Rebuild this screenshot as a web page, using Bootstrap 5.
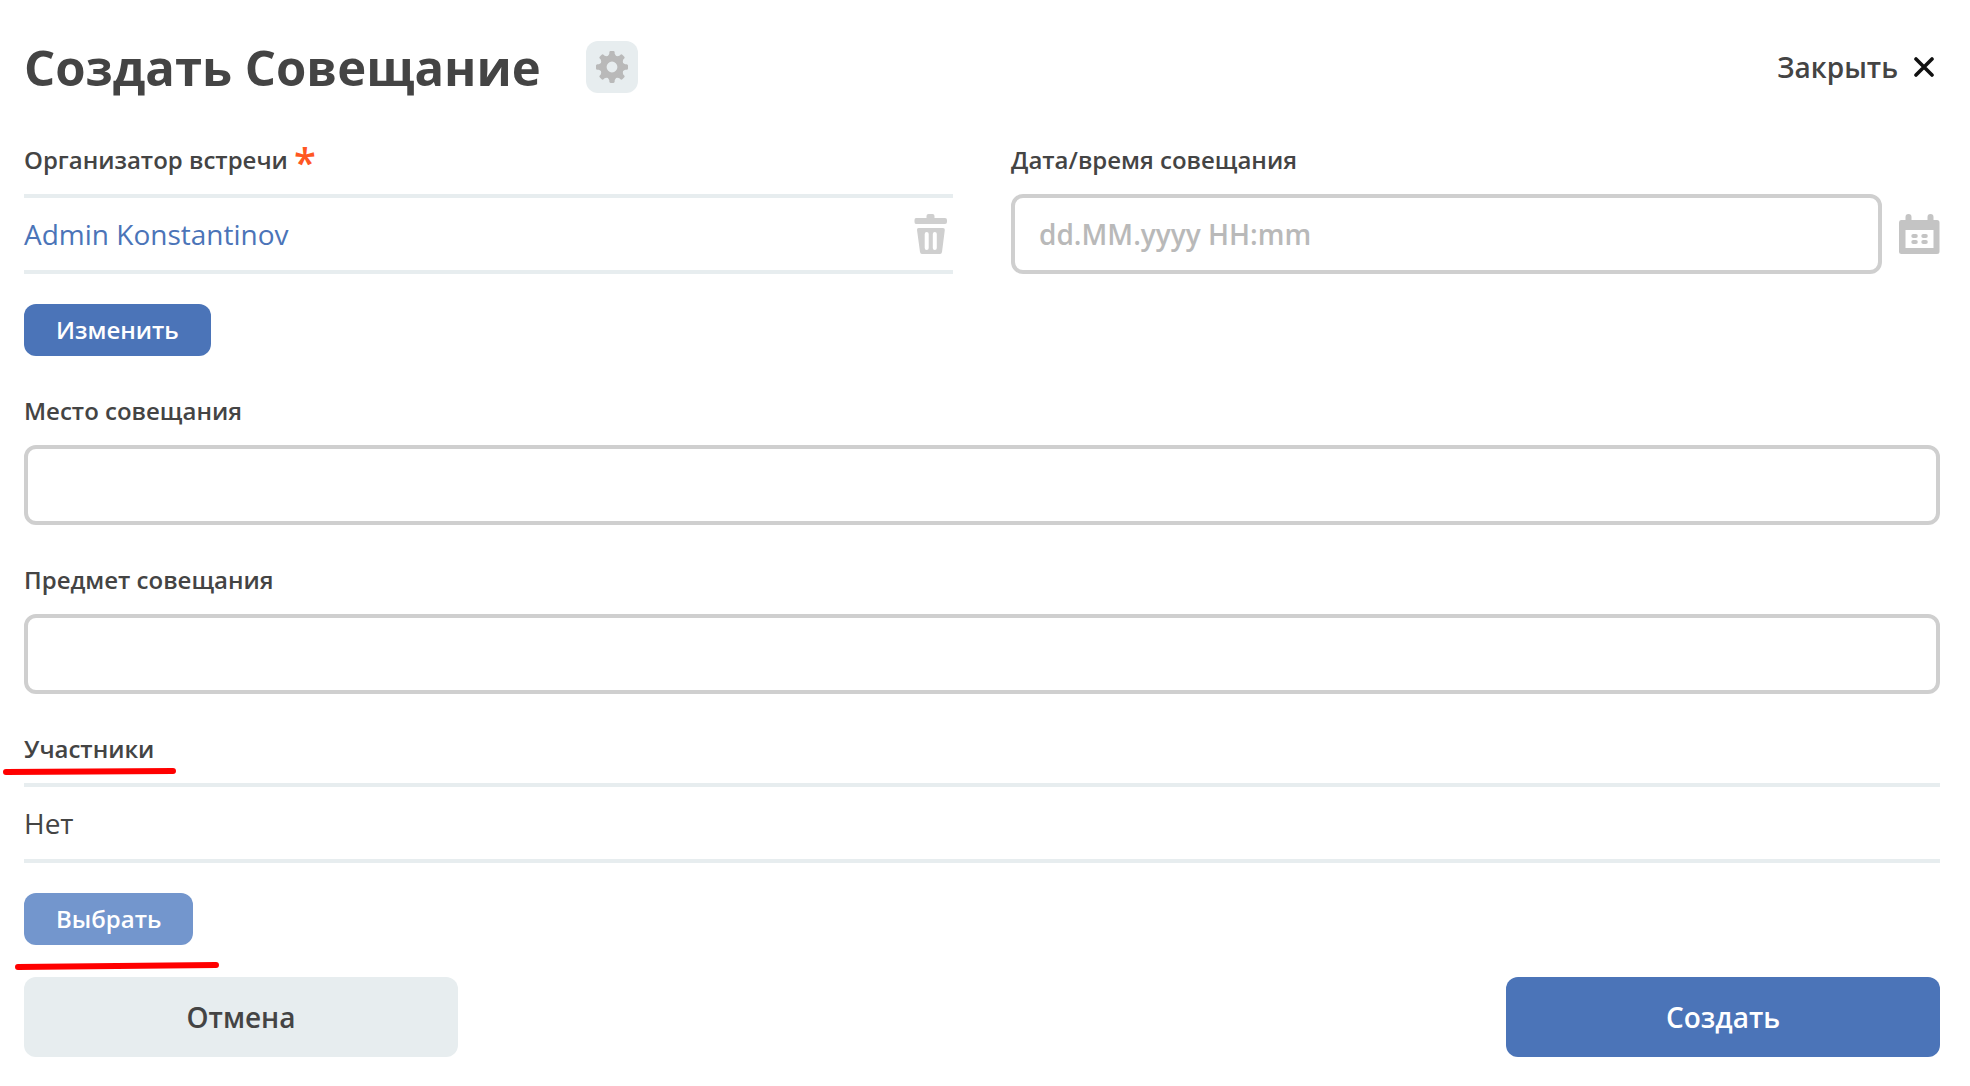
<!DOCTYPE html>
<html lang="ru">
<head>
<meta charset="utf-8">
<meta name="viewport" content="width=device-width, initial-scale=1">
<title>Создать Совещание</title>
<link href="https://cdn.jsdelivr.net/npm/bootstrap@5.3.0/dist/css/bootstrap.min.css" rel="stylesheet">
<style>
  body { font-family: "Open Sans", "Noto Sans", sans-serif; color: #444; background: #fff; }
  .meeting-form { padding: 39px 30px 28px 24px; }
  .form-title { font-size: 49px; line-height: 56px; font-weight: 700; }
  .gear-btn { width: 52px; height: 52px; border-radius: 12px; background: #e7edef; }
  .close-btn { font-size: 28px; line-height: 40px; font-weight: 600; color: #444; gap: 16px; margin-right: 6px; }
  .title-row { gap: 45px; margin-bottom: 48px; }
  .field-label { font-size: 24px; line-height: 34px; font-weight: 600; margin-bottom: 17px; }
  .field-gap { margin-top: 38px; }
  .top-grid { column-gap: 58px; }
  .top-grid > div { flex: 1 1 0; min-width: 0; }
  .req-star { color: #ff5722; font-size: 40px; line-height: 20px; vertical-align: -8px; font-weight: 600; }
  .value-row { height: 80px; border-top: 4px solid #e7edef; border-bottom: 4px solid #e7edef; font-size: 28px; line-height: 40px; }
  .value-row a { color: #4b74b8; }
  .trash-btn { margin-right: 5px; }
  .calendar-btn { margin-left: 17px; }
  .field-input { height: 80px; border: 4px solid #cfcfcf; border-radius: 12px; padding: 0 24px; font-size: 28px; font-weight: 600; color: #444; }
  .field-input::placeholder { color: #b9b9b9; opacity: 1; }
  .small-btn { height: 52px; padding: 0 32px; border: 0; border-radius: 12px; background: #4b74b8; color: #fff; font-size: 24px; line-height: 34px; font-weight: 600; margin-top: 30px; }
  .small-btn.is-light { background: #7396cd; }
  .big-btn { width: 434px; height: 80px; border: 0; border-radius: 12px; font-size: 28px; font-weight: 600; }
  .cancel-btn { background: #e7edef; color: #444; }
  .create-btn { background: #4b74b8; color: #fff; }
  .action-row { margin-top: 32px; }
  .marker { position: absolute; overflow: visible; pointer-events: none; }
  .marker-label { left: -24px; top: 35px; }
  .marker-button { left: -8px; bottom: -25px; }
</style>
<script src="https://cdn.jsdelivr.net/npm/bootstrap@5.3.0/dist/js/bootstrap.bundle.min.js"></script>
</head>
<body>
<form class="meeting-form">
  <header class="d-flex align-items-center title-row">
    <h1 class="form-title mb-0">Создать Совещание</h1>
    <button type="button" class="btn gear-btn p-0 border-0 d-flex align-items-center justify-content-center" aria-label="Настройки">
      <svg width="32" height="32" viewBox="-16 -16 32 32" fill="#b9b9b9"><defs><path id="tooth" d="M-4.600-10L-2.700-13.200V-14.600Q-2.600-16 -1.400-16H1.400Q2.600-16 2.700-14.600V-13.200L4.600-10Z"/></defs><circle r="8.600" fill="none" stroke="#b9b9b9" stroke-width="6.400"/><use href="#tooth"/><use href="#tooth" transform="rotate(45)"/><use href="#tooth" transform="rotate(90)"/><use href="#tooth" transform="rotate(135)"/><use href="#tooth" transform="rotate(180)"/><use href="#tooth" transform="rotate(225)"/><use href="#tooth" transform="rotate(270)"/><use href="#tooth" transform="rotate(315)"/></svg>
    </button>
    <button type="button" class="btn close-btn p-0 border-0 ms-auto d-flex align-items-center">Закрыть
      <svg width="20" height="20" viewBox="0 0 20 20" stroke="#111" stroke-width="3.600" stroke-linecap="round"><path d="M2 2L18 18M18 2L2 18"/></svg>
    </button>
  </header>

  <div class="d-flex top-grid">
    <div>
      <div class="field-label">Организатор встречи <span class="req-star">*</span></div>
      <div class="value-row d-flex align-items-center justify-content-between">
        <a href="#" class="text-decoration-none">Admin Konstantinov</a>
        <button type="button" class="btn trash-btn p-0 border-0 d-flex" aria-label="Удалить">
          <svg width="34" height="40" viewBox="0 0 34 40" fill="#cfcfcf"><path d="M2 4H12.500V2Q12.500 0 14.500 0H18.500Q20.500 0 20.500 2V4H31Q33 4 33 6V8Q33 10 31 10H2Q.5 10 .5 8V6Q.5 4 2 4Z"/><path fill-rule="evenodd" d="M4.500 14H29Q31 14 30.800 16L28 38Q27.700 40 26 40H8Q6.300 40 6 38L3 16Q2.800 14 4.500 14ZM12.700 18Q10.700 18 10.700 20V34Q10.700 36 12.700 36T14.700 34V20Q14.700 18 12.700 18ZM20.800 18Q18.800 18 18.800 20V34Q18.800 36 20.800 36T22.800 34V20Q22.800 18 20.800 18Z"/></svg>
        </button>
      </div>
      <button type="button" class="btn small-btn">Изменить</button>
    </div>
    <div>
      <label class="field-label d-block" for="when">Дата/время совещания</label>
      <div class="d-flex align-items-center">
        <input id="when" type="text" class="form-control field-input" placeholder="dd.MM.yyyy HH:mm">
        <button type="button" class="btn calendar-btn p-0 border-0 d-flex flex-shrink-0" aria-label="Календарь">
          <svg width="41" height="40" viewBox="1 0 41 40" fill="#c4c4c4"><path fill-rule="evenodd" d="M3 6H7.500V3Q7.500 0 10.500 0T13.500 3V6H29.500V3Q29.500 0 32.500 0T35.500 3V6H39Q41.500 6 41.500 8.500V37.500Q41.500 40 39 40H3.500Q1 40 1 37.500V8.500Q1 6 3 6ZM7.500 16V34H35.500V16Z"/><rect x="13.300" y="20" width="6.500" height="4" rx="2"/><rect x="23.300" y="20" width="6.500" height="4" rx="2"/><rect x="13.300" y="26" width="6.500" height="4" rx="2"/><rect x="23.300" y="26" width="6.500" height="4" rx="2"/></svg>
        </button>
      </div>
    </div>
  </div>

  <div class="field-gap">
    <label class="field-label d-block" for="place">Место совещания</label>
    <input id="place" type="text" class="form-control field-input">
  </div>
  <div class="field-gap">
    <label class="field-label d-block" for="subject">Предмет совещания</label>
    <input id="subject" type="text" class="form-control field-input">
  </div>
  <div class="field-gap position-relative">
    <div class="field-label">Участники</div>
    <div class="value-row d-flex align-items-center">Нет</div>
    <button type="button" class="btn small-btn is-light">Выбрать</button>
    <svg class="marker marker-label" width="176" height="8" stroke="#f00" stroke-width="6" stroke-linecap="round"><path d="M6 5L173 4"/></svg>
    <svg class="marker marker-button" width="206" height="8" stroke="#f00" stroke-width="6" stroke-linecap="round"><path d="M2 5L200 3"/></svg>
  </div>

  <footer class="d-flex justify-content-between action-row">
    <button type="button" class="btn big-btn cancel-btn">Отмена</button>
    <button type="submit" class="btn big-btn create-btn">Создать</button>
  </footer>
</form>
</body>
</html>
